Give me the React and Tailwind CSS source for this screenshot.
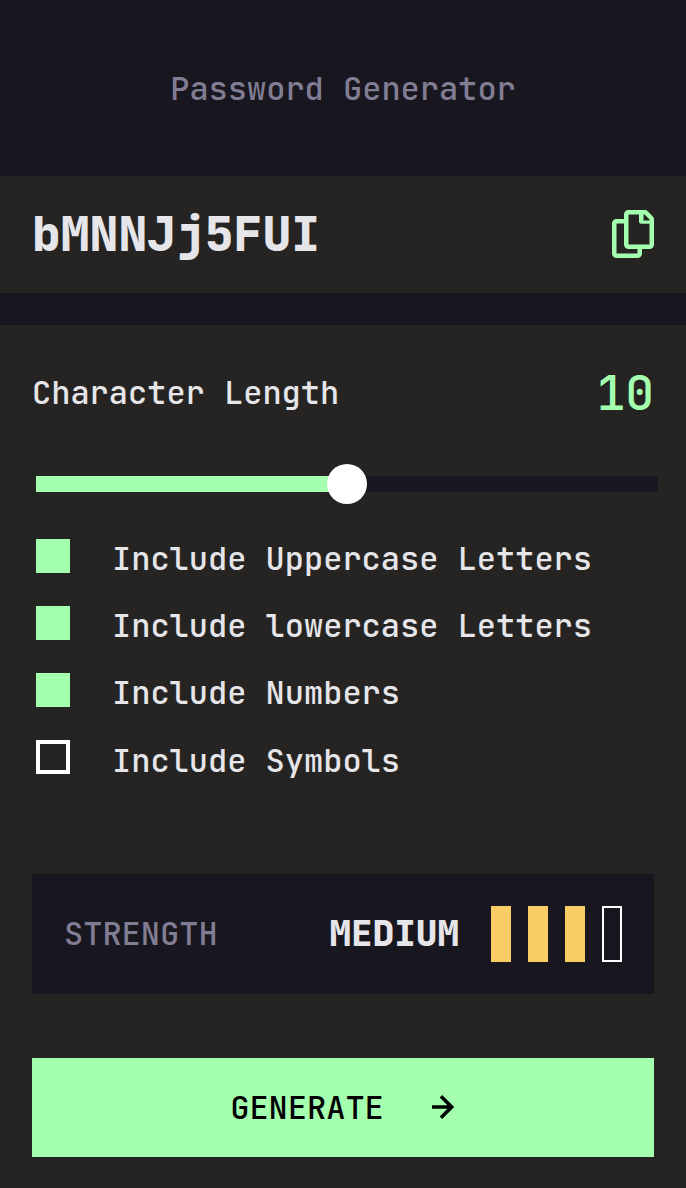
import { useState } from "react";

const OPTIONS = [
  "Include Uppercase Letters",
  "Include lowercase Letters",
  "Include Numbers",
  "Include Symbols",
];

function CopyIcon() {
  return (
    <svg viewBox="0 0 21 24" className="h-12 w-[42px] fill-[#a4ffaf]" aria-hidden="true">
      <path d="M20.341 3.091 17.909.659A2.25 2.25 0 0 0 16.319 0H8.25A2.25 2.25 0 0 0 6 2.25V4.5H2.25A2.25 2.25 0 0 0 0 6.75v15A2.25 2.25 0 0 0 2.25 24h10.5A2.25 2.25 0 0 0 15 21.75V19.5h3.75A2.25 2.25 0 0 0 21 17.25V4.682a2.25 2.25 0 0 0-.659-1.591ZM12.469 21.75H2.53a.281.281 0 0 1-.281-.281V7.03a.281.281 0 0 1 .281-.281H6v10.5a2.25 2.25 0 0 0 2.25 2.25h4.5v1.969a.282.282 0 0 1-.281.281Zm6-4.5H8.53a.281.281 0 0 1-.281-.281V2.53a.281.281 0 0 1 .281-.281H13.5v3.563c0 .621.504 1.125 1.125 1.125h4.125v10.031c0 .156-.126.282-.281.282Zm.281-12h-3V2.25h.451c.075 0 .147.03.2.082L18.667 4.6a.281.281 0 0 1 .083.199v.451Z" />
    </svg>
  );
}

function ArrowIcon() {
  return (
    <svg viewBox="0 0 12 12" className="mb-px size-6 fill-black" aria-hidden="true">
      <path d="m5.106 12 6-6-6-6-1.265 1.265 3.841 3.84H.001v1.79h7.681l-3.841 3.84z" />
    </svg>
  );
}

export default function App() {
  const [checked, setChecked] = useState([true, true, true, false]);
  const toggle = (i) => setChecked(checked.map((c, j) => (j === i ? !c : c)));

  return (
    <div className="flex h-[1188px] w-[686px] flex-col bg-[#18161f] font-['JetBrains_Mono','DejaVu_Sans_Mono',monospace] text-[32px] leading-10 font-medium text-[#e6e5ea]">
      <h1 className="flex h-44 items-center justify-center pt-px text-[#817d92]">
        Password Generator
      </h1>

      <section className="flex h-[117px] items-center justify-between bg-[#252422] px-8 pb-px">
        <span className="pb-px text-[48px] leading-[60px] font-extrabold">bMNNJj5FUI</span>
        <button>
          <CopyIcon />
        </button>
      </section>

      <main className="mt-8 flex flex-1 flex-col bg-[#252422] px-8 pt-[38px]">
        <div className="flex h-[60px] items-center justify-between pb-px">
          <span>Character Length</span>
          <span className="text-[48px] leading-[60px] text-[#a4ffaf]">10</span>
        </div>

        <div className="-mr-1 mt-[41px] ml-1 flex h-10 items-center">
          <div className="h-4 flex-1 bg-[#a4ffaf]" />
          <div className="z-10 -mx-5 size-10 rounded-full bg-white" />
          <div className="h-4 flex-1 bg-[#18161f]" />
        </div>

        <ul className="mt-[35px] ml-1 flex flex-col gap-[33px] leading-[39px]">
          {OPTIONS.map((label, i) => (
            <li key={label} className="flex h-[34px] gap-[42px]" onClick={() => toggle(i)}>
              <span
                className={
                  checked[i]
                    ? "size-[34px] bg-[#a4ffaf]"
                    : "size-[34px] border-4 border-white"
                }
              />
              <span className={i === 3 ? "pt-px" : ""}>{label}</span>
            </li>
          ))}
        </ul>

        <div className="mt-[100px] flex h-[120px] items-center bg-[#18161f] px-8">
          <span className="pb-px text-[#817d92]">STRENGTH</span>
          <span className="mr-8 ml-auto pb-0.5 text-[36px] font-extrabold">MEDIUM</span>
          <div className="flex gap-[17px]">
            <span className="h-14 w-5 bg-[#f8cd65]" />
            <span className="h-14 w-5 bg-[#f8cd65]" />
            <span className="h-14 w-5 bg-[#f8cd65]" />
            <span className="h-14 w-5 border-2 border-white" />
          </div>
        </div>

        <button className="mt-16 flex h-[99px] items-center justify-center gap-12 bg-[#a4ffaf] text-black">
          GENERATE
          <ArrowIcon />
        </button>
      </main>
    </div>
  );
}
